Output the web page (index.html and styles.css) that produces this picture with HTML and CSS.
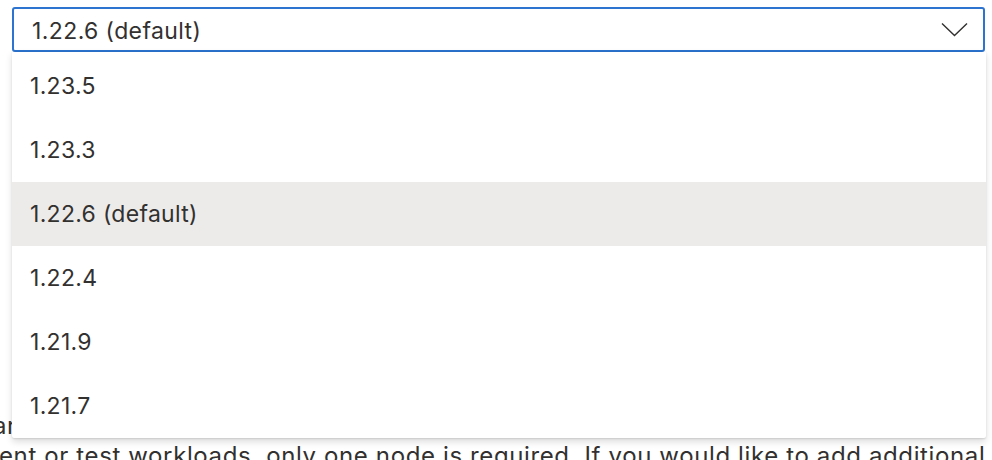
FILE: index.html
```html
<!DOCTYPE html>
<html lang="en">
<head>
<meta charset="utf-8">
<title>Kubernetes version</title>
<link rel="stylesheet" href="styles.css">
</head>
<body>
<div class="page">
  <div class="field">
    <div class="select">
      <span class="value">1.22.6 (default)</span>
      <svg class="chevron" width="27" height="15" viewBox="0 0 27 15" aria-hidden="true">
        <path d="M1 1.5 L13.5 13.5 L26 1.5" fill="none" stroke="#323130" stroke-width="1.4"/>
      </svg>
    </div>
    <ul class="menu">
      <li class="option">1.23.5</li>
      <li class="option">1.23.3</li>
      <li class="option selected">1.22.6 (default)</li>
      <li class="option">1.22.4</li>
      <li class="option">1.21.9</li>
      <li class="option">1.21.7</li>
    </ul>
  </div>
  <div class="help">
    <div class="line line-1"><span class="cut">Regul</span>ar node count to meet the demand of the cluster.</div>
    <div class="line line-2"><span class="cut">developm</span>ent or test workloads, only one node is required. If you would like to add additional</div>
  </div>
</div>
</body>
</html>
```

FILE: styles.css
```css
html, body {
  margin: 0;
  padding: 0;
  background: #ffffff;
}
body {
  width: 992px;
  height: 460px;
  overflow: hidden;
  font-family: Inter, "Noto Sans", sans-serif;
  color: #323130;
}
.page {
  padding: 7px 7px 0 12px;
}
.field {
  position: relative;
  width: 973px;
  z-index: 2;
}
.select {
  box-sizing: border-box;
  height: 45px;
  border: 2px solid #2c74cf;
  border-radius: 3px;
  display: flex;
  align-items: center;
  justify-content: space-between;
  padding: 3px 15px 0 18px;
  font-size: 23px;
  letter-spacing: 0.4px;
  background: #fff;
}
.value {
  line-height: 1;
}
.chevron {
  display: block;
  margin-top: -3px;
}
.menu {
  position: absolute;
  top: 100%;
  left: 0;
  width: 974px;
  margin: 0;
  padding: 2px 0 0;
  list-style: none;
  background: #fff;
  box-shadow: 0 3.2px 7.2px rgba(0,0,0,0.132), 0 0.6px 1.8px rgba(0,0,0,0.108);
  border-radius: 0 0 2px 2px;
}
.option {
  height: 64px;
  display: flex;
  align-items: center;
  padding-left: 18px;
  font-size: 23px;
  letter-spacing: 0.3px;
}
.option.selected {
  background: #edebe9;
}
.help {
  margin-left: -12px;
  margin-top: 359px;
  font-size: 24px;
  letter-spacing: 0.62px;
  line-height: 30px;
}
.line {
  white-space: nowrap;
}
.line-1 {
  margin-left: -7px;
}
.line-2 {
  margin-left: -1px;
}
.cut {
  display: inline-block;
  width: 0;
  direction: rtl;
}
```
